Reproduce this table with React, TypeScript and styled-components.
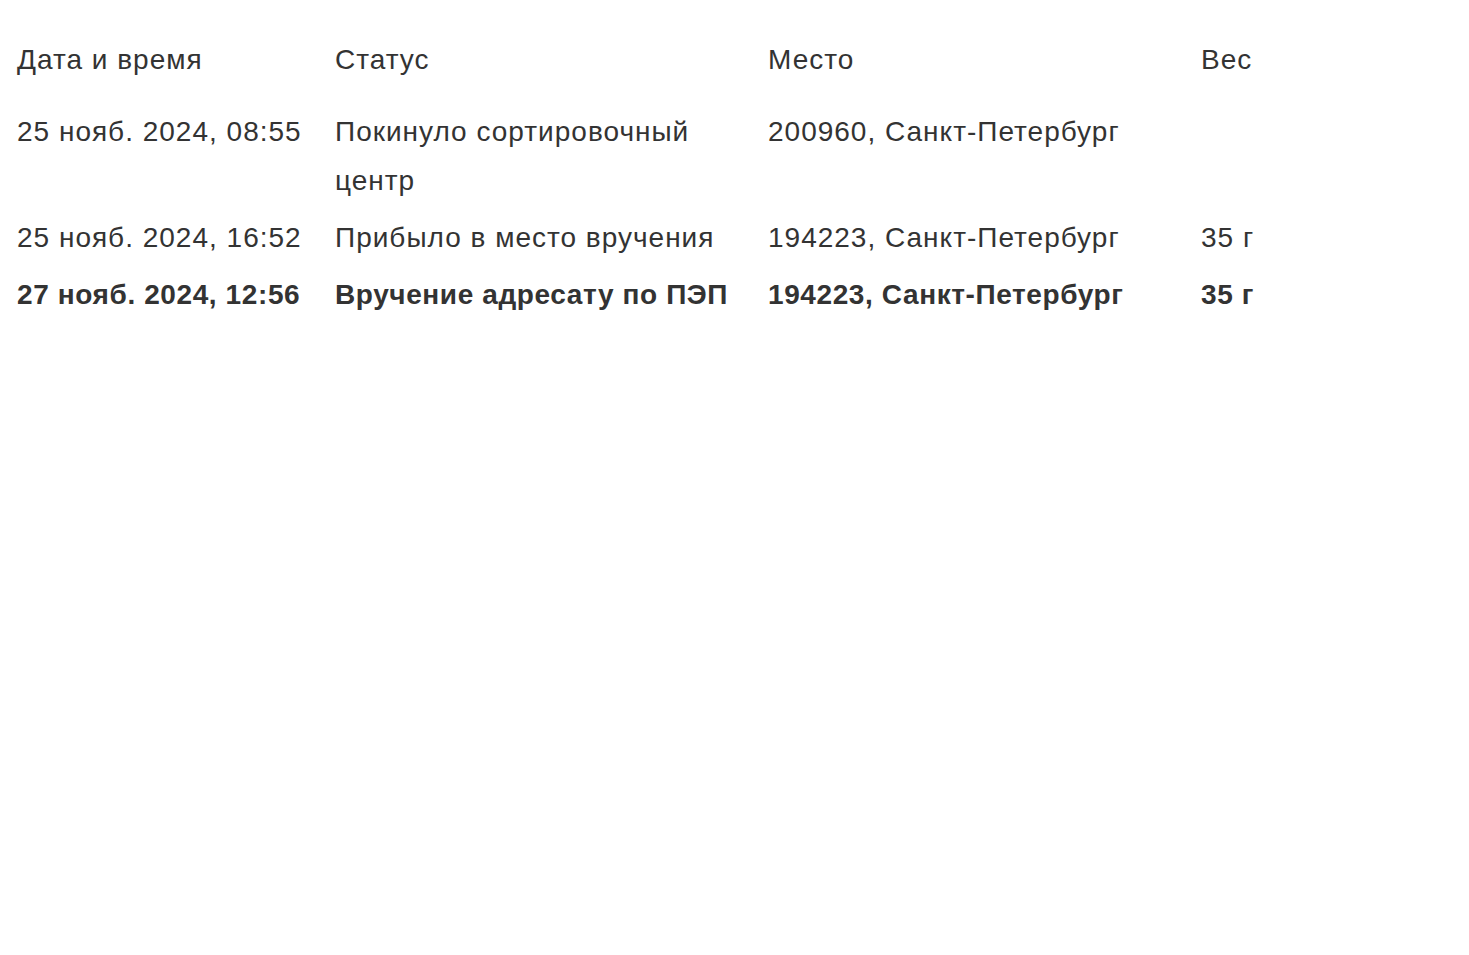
import React from 'react';
import styled, { createGlobalStyle } from 'styled-components';

const GlobalStyle = createGlobalStyle`
  body {
    margin: 0;
    background: #ffffff;
    font-family: "Liberation Sans", Arial, sans-serif;
    color: #333333;
  }
`;

const Wrapper = styled.div`
  padding: 31px 17px 0;
`;

const Table = styled.div`
  display: grid;
  grid-template-columns: 318px 433px 433px 1fr;
  font-size: 28px;
  line-height: 49px;
  letter-spacing: 1px;
`;

const HeadCell = styled.div`
  padding: 4px 0 19px;
`;

const Cell = styled.div<{ $strong?: boolean }>`
  padding: 4px 16px 4px 0;
  font-weight: ${(p) => (p.$strong ? 700 : 400)};
  letter-spacing: ${(p) => (p.$strong ? '0.6px' : '1px')};
`;

type Row = { date: string; status: string; place: string; weight: string; last?: boolean };

const rows: Row[] = [
  { date: '25 нояб. 2024, 08:55', status: 'Покинуло сортировочный центр', place: '200960, Санкт-Петербург', weight: '' },
  { date: '25 нояб. 2024, 16:52', status: 'Прибыло в место вручения', place: '194223, Санкт-Петербург', weight: '35 г' },
  { date: '27 нояб. 2024, 12:56', status: 'Вручение адресату по ПЭП', place: '194223, Санкт-Петербург', weight: '35 г', last: true },
];

const App = () => {
  return (
    <Wrapper>
      <GlobalStyle />
      <Table>
        <HeadCell>Дата и время</HeadCell>
        <HeadCell>Статус</HeadCell>
        <HeadCell>Место</HeadCell>
        <HeadCell>Вес</HeadCell>
        {rows.map((r) => (
          <React.Fragment key={r.date}>
            <Cell $strong={r.last}>{r.date}</Cell>
            <Cell $strong={r.last}>{r.status}</Cell>
            <Cell $strong={r.last}>{r.place}</Cell>
            <Cell $strong={r.last}>{r.weight}</Cell>
          </React.Fragment>
        ))}
      </Table>
    </Wrapper>
  );
};

export default App;
